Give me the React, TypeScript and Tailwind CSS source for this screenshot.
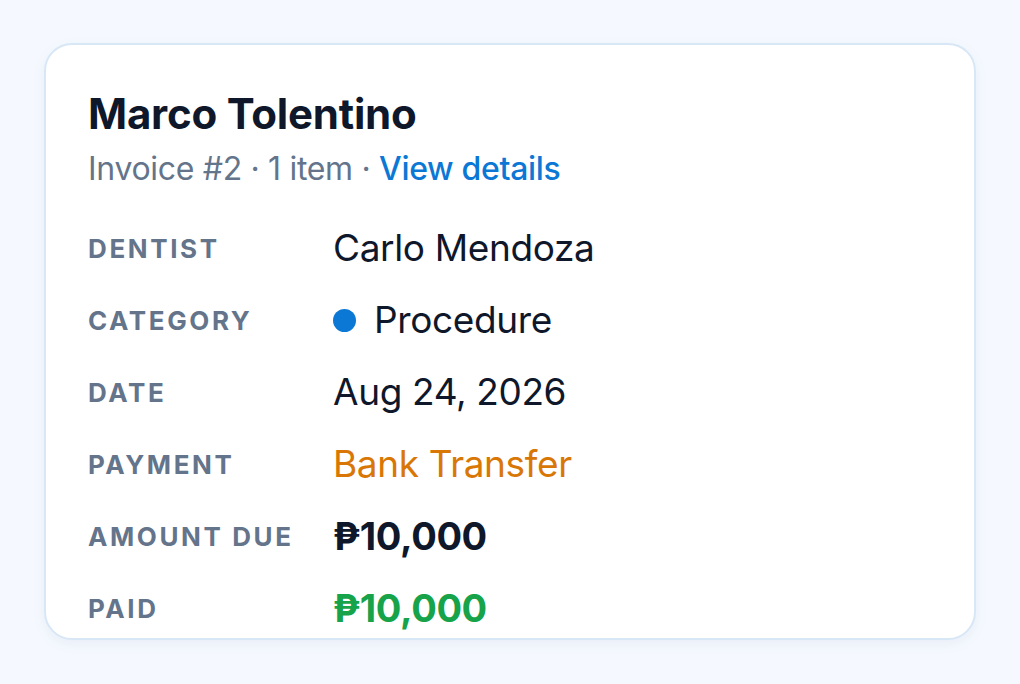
const rows = [
    { label: 'Dentist', value: 'Carlo Mendoza', kind: 'plain' },
    { label: 'Category', value: 'Procedure', kind: 'category' },
    { label: 'Date', value: 'Aug 24, 2026', kind: 'plain' },
    { label: 'Payment', value: 'Bank Transfer', kind: 'payment' },
    { label: 'Amount Due', value: '₱10,000', kind: 'amount' },
    { label: 'Paid', value: '₱10,000', kind: 'paid' },
]

const valueClass = (kind: string) => {
    if (kind == 'payment') return 'text-[#d97706]'
    if (kind == 'amount') return 'font-bold text-[#0f172a] text-[38px]'
    if (kind == 'paid') return 'font-bold text-[#16a34a] text-[38px]'
    return 'text-[#0f172a]'
}

const InvoiceCard = () => {
    return (
        <div className="h-full bg-white border-2 border-[#d8e7f6] rounded-[28px] shadow-[0_4px_14px_rgba(30,64,120,0.06)] overflow-hidden px-[42px] pt-[43px]">
            <h1 className="text-[42px] leading-[52px] font-bold tracking-[-0.005em] text-[#0f172a]">
                Marco Tolentino
            </h1>
            <p className="mt-[9px] text-[32px] leading-[40px] text-[#64748b] tracking-[-0.01em]">
                Invoice #2 · 1 item · <span className="text-[#0b78d6] font-medium">View details</span>
            </p>
            <div className="mt-[39px] grid grid-cols-[245px_1fr] gap-y-[32px]">
                {rows.map((row) => (
                    <div key={row.label} className="contents">
                        <div className="h-[40px] flex items-center text-[26px] font-bold uppercase tracking-[0.1em] text-[#64748b]">
                            {row.label}
                        </div>
                        <div className={"h-[40px] flex items-center gap-[18px] text-[37px] tracking-[-0.01em] " + valueClass(row.kind)}>
                            {row.kind == 'category' && (
                                <span className="w-[23px] h-[23px] rounded-full bg-[#0b78d6] shrink-0" />
                            )}
                            {row.value}
                        </div>
                    </div>
                ))}
            </div>
        </div>
    )
}

export default function App() {
    return (
        <div className="w-[1020px] h-[684px] bg-[#f5f9ff] px-[44px] pt-[43px] pb-[44px]" style={{ fontFamily: 'Inter, "Noto Sans", sans-serif' }}>
            <InvoiceCard />
        </div>
    )
}
